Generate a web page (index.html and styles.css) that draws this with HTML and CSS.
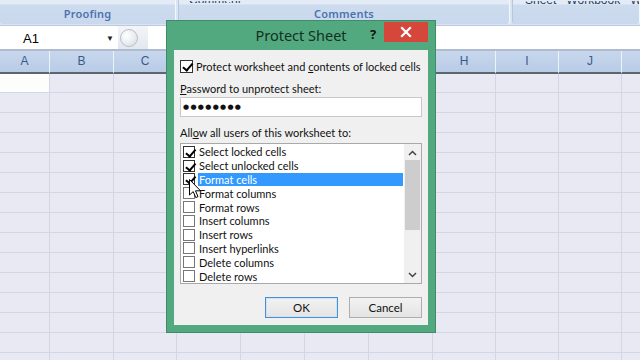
FILE: index.html
```html
<!DOCTYPE html>
<html>
<head>
<meta charset="utf-8">
<link rel="stylesheet" href="styles.css">
</head>
<body>
<div class="app">
  <div class="ribbon">
    <div class="group g1"><span class="cut"></span><span class="glabel">Proofing</span></div>
    <div class="group g2"><span class="cut">Comment</span><span class="glabel">Comments</span></div>
    <div class="group g3"><span class="cut">Sheet&nbsp;&nbsp;&nbsp;Workbook&nbsp;&nbsp;&nbsp;Wor</span><span class="glabel"></span></div>
  </div>
  <div class="fbar">
    <div class="namebox"><span class="nm">A1</span><span class="dd">&#9660;</span></div>
    <div class="fsep"><span class="knob"></span></div>
    <div class="fx"></div>
  </div>
  <div class="sheet">
    <div class="col w50"><div class="hd">A</div><div class="cells first"></div></div>
    <div class="col w64"><div class="hd">B</div><div class="cells"></div></div>
    <div class="col w63"><div class="hd">C</div><div class="cells"></div></div>
    <div class="col w64"><div class="hd">D</div><div class="cells"></div></div>
    <div class="col w64"><div class="hd">E</div><div class="cells"></div></div>
    <div class="col w64"><div class="hd">F</div><div class="cells"></div></div>
    <div class="col w64"><div class="hd">G</div><div class="cells"></div></div>
    <div class="col w63"><div class="hd">H</div><div class="cells"></div></div>
    <div class="col w63"><div class="hd">I</div><div class="cells"></div></div>
    <div class="col w63"><div class="hd">J</div><div class="cells"></div></div>
    <div class="col wlast"><div class="hd"></div><div class="cells"></div></div>
  </div>
</div>

<div class="dialog">
  <div class="titlebar">
    <span class="title">Protect Sheet</span>
    <span class="help">?</span>
    <span class="close"><svg width="12" height="12" viewBox="0 0 12 12"><path d="M2 2 L10 10 M10 2 L2 10" stroke="#fff" stroke-width="2.2" stroke-linecap="square"/></svg></span>
  </div>
  <div class="body">
    <div class="chkrow"><span class="cb on"></span><span>Protect worksheet and <u>c</u>ontents of locked cells</span></div>
    <div class="lbl"><u>P</u>assword to unprotect sheet:</div>
    <div class="pw">&#9679;&#9679;&#9679;&#9679;&#9679;&#9679;&#9679;&#9679;</div>
    <div class="lbl lbl2">All<u>o</u>w all users of this worksheet to:</div>
    <div class="listbox">
      <div class="items">
        <div class="item"><span class="cb on"></span><span class="t">Select locked cells</span></div>
        <div class="item"><span class="cb on"></span><span class="t">Select unlocked cells</span></div>
        <div class="item sel"><span class="cb on"></span><span class="t">Format cells</span></div>
        <div class="item"><span class="cb"></span><span class="t">Format columns</span></div>
        <div class="item"><span class="cb"></span><span class="t">Format rows</span></div>
        <div class="item"><span class="cb"></span><span class="t">Insert columns</span></div>
        <div class="item"><span class="cb"></span><span class="t">Insert rows</span></div>
        <div class="item"><span class="cb"></span><span class="t">Insert hyperlinks</span></div>
        <div class="item"><span class="cb"></span><span class="t">Delete columns</span></div>
        <div class="item"><span class="cb"></span><span class="t">Delete rows</span></div>
      </div>
      <div class="scroll">
        <svg class="arr" width="9" height="6" viewBox="0 0 9 6"><path d="M1 5 L4.5 1.5 L8 5" fill="none" stroke="#444" stroke-width="1.5"/></svg>
        <div class="track"><div class="thumb"></div></div>
        <svg class="arr" width="9" height="6" viewBox="0 0 9 6"><path d="M1 1 L4.5 4.5 L8 1" fill="none" stroke="#444" stroke-width="1.5"/></svg>
      </div>
    </div>
    <div class="buttons">
      <button class="btn def">OK</button>
      <button class="btn">Cancel</button>
    </div>
  </div>
</div>

<svg class="cursor" width="13" height="20" viewBox="0 0 13 20"><path d="M0.5 0.5 L0.5 16 L4.2 12.6 L6.8 18.6 L9 17.6 L6.5 11.8 L11.5 11.8 Z" fill="#fff" stroke="#000" stroke-width="1"/></svg>
</body>
</html>
```

FILE: styles.css
```css
* { box-sizing: border-box; }
html, body { margin: 0; padding: 0; }
body {
  width: 640px;
  height: 360px;
  overflow: hidden;
  position: relative;
  font-family: "Lato", "Noto Sans", sans-serif;
  background: #e8e9f3;
}
.app { display: flex; flex-direction: column; width: 640px; overflow: hidden; }

/* ribbon */
.ribbon {
  height: 26px;
  display: flex;
  background: #dbe5f2;
  border-bottom: 1px solid #b9c9df;
  overflow: hidden;
}
.group {
  display: flex;
  flex-direction: column;
  height: 24px;
  background: linear-gradient(#e3ebf6 0, #e3ebf6 4px, #cddbee 5px, #c9d8ed 100%);
  border-radius: 0 0 3px 3px;
  border-right: 1px solid #f4f8fc;
  border-left: 1px solid #b6c8e0;
  overflow: hidden;
}
.g1 { width: 176px; border-left: none; }
.g2 { width: 332px; margin-left: 2px; }
.g3 { flex: 1; margin-left: 2px; }
.cut {
  height: 4px;
  overflow: hidden;
  font-size: 12px;
  line-height: 0px;
  color: #2b3f5e;
  padding-left: 10px;
  padding-top: 0;
  margin-top: 0;
  white-space: nowrap;
  font-family: "Liberation Sans", sans-serif;
  clip-path: inset(1px 0 0 0);
}
.g3 .cut { padding-left: 12px; }
.glabel {
  flex: 1;
  text-align: center;
  font-size: 11px;
  line-height: 21px;
  color: #4d73ad;
  font-family: "Noto Sans", sans-serif;
  font-weight: 600;
  letter-spacing: 0.2px;
}

/* formula bar */
.fbar {
  height: 25px;
  display: flex;
  align-items: center;
  background: #fff;
  border-bottom: 2px solid #aebbd0;
}
.namebox {
  width: 118px;
  display: flex;
  align-items: center;
  height: 100%;
}
.nm {
  font-family: "Liberation Sans", sans-serif;
  font-size: 13px;
  padding-left: 23px;
  padding-top: 1px;
  flex: 1;
}
.dd { font-size: 8px; color: #222; margin-right: 4px; }
.fsep {
  width: 30px;
  height: 100%;
  display: flex;
  align-items: center;
  background: linear-gradient(#f3f5f8, #e3e7ee);
}
.knob {
  width: 18px;
  height: 18px;
  border-radius: 50%;
  border: 1px solid #b8c0cc;
  background: radial-gradient(circle at 35% 35%, #ffffff, #d6dbe3);
  margin-left: 2px;
}
.fx { flex: 1; height: 100%; background: #fff; }

/* sheet */
.sheet {
  display: flex;
  height: 310px;
  overflow: hidden;
}
.col {
  display: flex;
  flex-direction: column;
  flex: none;
  border-right: 1px solid #d3d6e6;
}
.w50 { width: 50px; }
.w63 { width: 63px; }
.w64 { width: 64px; }
.wlast { flex: 1; border-right: none; }
.hd {
  height: 23px;
  background: linear-gradient(#c7d7ed, #b9cce6);
  border-right: 1px solid #eef3fa;
  margin-right: -1px;
  border-bottom: 2px solid #5d6570;
  text-align: center;
  font-size: 12px;
  line-height: 21px;
  color: #3a5a8c;
  font-family: "Liberation Sans", sans-serif;
}
.cells {
  flex: 1;
  background-color: #e8e9f3;
  background-image: linear-gradient(#d3d6e6 1px, transparent 1px);
  background-size: 100% 20px;
  background-position: 0 18px;
}
.cells.first {
  background-image:
    linear-gradient(#fdfdfb, #fdfdfb),
    linear-gradient(#d3d6e6 1px, transparent 1px);
  background-size: 100% 18px, 100% 20px;
  background-position: 0 0, 0 18px;
  background-repeat: no-repeat, repeat;
}

/* dialog */
.dialog {
  position: absolute;
  left: 166px;
  top: 20px;
  width: 270px;
  height: 313px;
  background: #52a97f;
  border: 1px solid #3f8c66;
  display: flex;
  flex-direction: column;
  padding: 0 7px 7px 7px;
}
.titlebar {
  height: 29px;
  position: relative;
  display: flex;
  align-items: center;
  justify-content: center;
}
.title {
  font-family: "Noto Sans", sans-serif;
  font-size: 14.5px;
  color: #14301f;
  margin-top: -1px;
}
.help {
  position: absolute;
  left: 196px;
  top: 4px;
  font-family: "Noto Sans", sans-serif;
  font-size: 13px;
  font-weight: bold;
  color: #111;
}
.close {
  position: absolute;
  left: 210px;
  top: 1px;
  width: 44px;
  height: 20px;
  background: #d5463b;
  display: flex;
  align-items: center;
  justify-content: center;
}
.body {
  flex: 1;
  background: #f0f0f0;
  padding: 0 6px;
  display: flex;
  flex-direction: column;
  font-size: 11px;
  color: #111;
  white-space: nowrap;
}
.chkrow {
  display: flex;
  align-items: center;
  gap: 3px;
  margin-top: 9px;
  height: 14px;
}
.cb {
  width: 13px;
  height: 13px;
  border: 1px solid #333;
  background: #fff;
  flex: none;
  position: relative;
}
.cb.on::after {
  content: "";
  position: absolute;
  left: 3.5px;
  top: 0px;
  width: 3.5px;
  height: 7.5px;
  border: solid #000;
  border-width: 0 2px 2px 0;
  transform: rotate(40deg);
}
.lbl { margin-top: 8px; height: 15px; line-height: 15px; }
.lbl2 { margin-top: 8px; }
.pw {
  margin-top: 1px;
  height: 20px;
  background: #fff;
  border: 1px solid #c8c8c8;
  font-family: "DejaVu Sans", sans-serif;
  font-size: 7px;
  letter-spacing: 1.3px;
  line-height: 18px;
  padding-left: 2px;
}
.listbox {
  margin-top: 3px;
  height: 141px;
  background: #fff;
  border: 1px solid #a9a9a9;
  display: flex;
  padding: 0 0 0 2px;
}
.items { flex: 1; padding-top: 1px; }
.item {
  height: 13.8px;
  display: flex;
  align-items: center;
}
.item .cb { width: 12px; height: 12px; margin-right: 3px; border-color: #777; }
.item .cb.on { border-color: #333; }
.item .t { flex: 1; padding-left: 1px; line-height: 13px; }
.item.sel .t { background: #3399ff; color: #fff; }
.scroll {
  width: 17px;
  margin-left: 1px;
  display: flex;
  flex-direction: column;
  align-items: center;
  background: #f0f0f0;
}
.arr { margin: 6px 0 4px; flex: none; }
.scroll .arr:last-child { margin: 4px 0 5px; }
.track { flex: 1; width: 100%; padding: 0 1px; }
.thumb { height: 70px; background: #cdcdcd; }
.buttons {
  display: flex;
  justify-content: flex-end;
  gap: 11px;
  margin-top: 13px;
}
.btn {
  width: 73px;
  height: 21px;
  font-family: inherit;
  font-size: 11.5px;
  color: #111;
  border: 1px solid #adadad;
  background: linear-gradient(#f2f2f2, #e4e4e4);
  padding: 0;
}
.btn.def { border-color: #4a8fd0; box-shadow: inset 0 0 0 1px #cde4f7; }
.cursor { position: absolute; left: 189px; top: 179px; }
```
